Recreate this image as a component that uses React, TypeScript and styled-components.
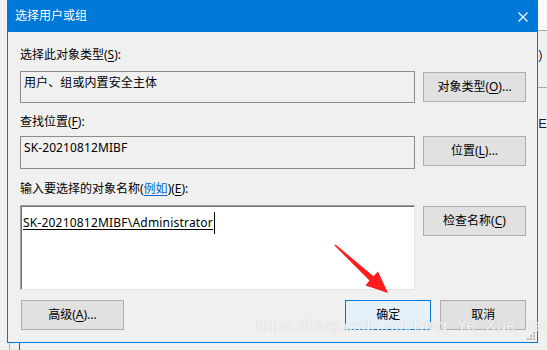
import styled, { createGlobalStyle } from "styled-components";

const GlobalStyle = createGlobalStyle`
  html, body {
    margin: 0;
    padding: 0;
    background: #f0f0f0;
  }
  * {
    box-sizing: border-box;
  }
`;

const font = `"Noto Sans", "Noto Sans CJK SC", sans-serif`;

const Page = styled.div`
  position: relative;
  width: 547px;
  height: 350px;
  overflow: hidden;
  background: #f0f0f0;
  font-family: ${font};
  font-size: 12px;
  color: #000;
`;

const TopArea = styled.div`
  display: flex;
  padding-left: 7px;
`;

const Dialog = styled.div`
  position: relative;
  width: 532px;
  height: 343px;
  border: 1px solid #0078d7;
  background: #f0f0f0;
  display: flex;
  flex-direction: column;
`;

const TitleBar = styled.div`
  height: 31px;
  background: #0078d7;
  color: #fff;
  display: flex;
  align-items: center;
  justify-content: space-between;
  padding: 0 9px 1px 7px;
  line-height: 16px;
`;

const CloseButton = styled.div`
  width: 10px;
  height: 10px;
  display: flex;
  margin-top: 1px;
`;

const Body = styled.div`
  padding: 15px 11px 0 12px;
  display: flex;
  flex-direction: column;
`;

const Label = styled.div<{ $top: number }>`
  margin-top: ${(p) => p.$top}px;
  height: 16px;
  line-height: 16px;
  white-space: nowrap;
`;

const Key = styled.span`
  text-decoration: underline;
  text-underline-offset: 2px;
`;

const Link = styled.span`
  color: #0066cc;
  text-decoration: underline;
  text-underline-offset: 2px;
`;

const Row = styled.div<{ $top: number }>`
  margin-top: ${(p) => p.$top}px;
  display: grid;
  grid-template-columns: 395px 103px;
  column-gap: 8px;
  align-items: start;
`;

const ReadBox = styled.div<{ $height: number }>`
  height: ${(p) => p.$height}px;
  border: 1px solid #8c8c8c;
  background: #f0f0f0;
  padding: 3px 2px 0 3px;
  line-height: 16px;
  white-space: nowrap;
  letter-spacing: 0.1px;
`;

const EditBox = styled.div`
  height: 85px;
  background: #fff;
  border-style: solid;
  border-width: 1px;
  border-color: #a0a0a0 #e3e3e3 #e3e3e3 #a0a0a0;
  box-shadow: inset 1px 1px 0 #6d6d6d;
  padding: 6px 2px 0 2px;
  line-height: 22px;
  white-space: nowrap;
  display: flex;
  align-items: flex-start;
`;

const Resolved = styled.span`
  text-decoration: underline;
  text-underline-offset: 2px;
  letter-spacing: 0.2px;
`;

const Caret = styled.span`
  display: inline-block;
  width: 1px;
  height: 22px;
  background: #000;
  margin-left: 1px;
`;

const Button = styled.div<{ $top?: number; $width?: number; $primary?: boolean }>`
  margin-top: ${(p) => p.$top ?? 0}px;
  width: ${(p) => p.$width ?? 103}px;
  height: 30px;
  border: 1px solid ${(p) => (p.$primary ? "#0078d7" : "#adadad")};
  background: ${(p) => (p.$primary ? "#e5f1fb" : "#e1e1e1")};
  display: flex;
  align-items: center;
  justify-content: center;
  line-height: 16px;
  white-space: nowrap;
`;

const Footer = styled.div`
  margin-top: 10px;
  display: flex;
  align-items: center;
  gap: 9px;
  padding-left: 1px;
`;

const Spacer = styled.div`
  flex: 1;
`;

const Side = styled.div`
  flex: 1;
  position: relative;
  font-family: "Liberation Sans", sans-serif;
  font-size: 13px;
`;

const SideTop = styled.div`
  height: 31px;
  background: #fafafa;
  border-bottom: 1px solid #a6a6a6;
`;

const SideText = styled.div<{ $top: number }>`
  margin-top: ${(p) => p.$top}px;
  line-height: 14px;
  color: #1a1a3a;
`;

const SideLine = styled.div<{ $top: number }>`
  margin-top: ${(p) => p.$top}px;
  height: 1px;
  background: #a6a6a6;
`;

const BottomStrip = styled.div`
  margin-left: 9px;
  width: 11px;
  height: 7px;
  border-left: 1px solid #b4b4b4;
  border-right: 1px solid #505050;
`;

const Watermark = styled.div`
  position: absolute;
  left: 256px;
  top: 316px;
  font-family: "Liberation Sans", Arial, sans-serif;
  font-size: 17px;
  line-height: 20px;
  color: rgba(255, 255, 255, 0.9);
  text-shadow: 0 0 1px rgba(0, 0, 0, 0.25);
  white-space: nowrap;
  pointer-events: none;
`;

const Arrow = styled.svg`
  position: absolute;
  left: 330px;
  top: 240px;
`;

const Grip = styled.svg`
  position: absolute;
  right: 1px;
  bottom: 1px;
`;

const App = () => {
  return (
    <Page>
      <GlobalStyle />
      <TopArea>
        <Dialog>
          <TitleBar>
            <span>选择用户或组</span>
            <CloseButton>
              <svg width="10" height="10" viewBox="0 0 10 10">
                <path d="M0.5 0.5 L9.5 9.5 M9.5 0.5 L0.5 9.5" stroke="#fff" strokeWidth="1.1" />
              </svg>
            </CloseButton>
          </TitleBar>
          <Body>
            <Label $top={0}>
              选择此对象类型(<Key>S</Key>):
            </Label>
            <Row $top={8}>
              <ReadBox $height={32}>用户、组或内置安全主体</ReadBox>
              <Button $top={1}>
                对象类型(<Key>O</Key>)...
              </Button>
            </Row>
            <Label $top={11}>
              查找位置(<Key>F</Key>):
            </Label>
            <Row $top={6}>
              <ReadBox $height={33}>SK-20210812MIBF</ReadBox>
              <Button>
                位置(<Key>L</Key>)...
              </Button>
            </Row>
            <Label $top={12}>
              输入要选择的对象名称(<Link>例如</Link>)(<Key>E</Key>):
            </Label>
            <Row $top={8}>
              <EditBox>
                <Resolved>SK-20210812MIBF\Administrator</Resolved>
                <Caret />
              </EditBox>
              <Button $top={1}>
                检查名称(<Key>C</Key>)
              </Button>
            </Row>
            <Footer>
              <Button>
                高级(<Key>A</Key>)...
              </Button>
              <Spacer />
              <Button $width={86} $primary>
                确定
              </Button>
              <Button $width={86}>取消</Button>
            </Footer>
          </Body>
          <Grip width="10" height="10" viewBox="0 0 10 10">
            {[
              [7, 1],
              [7, 4],
              [4, 4],
              [7, 7],
              [4, 7],
              [1, 7],
            ].map(([x, y]) => (
              <rect key={`${x}-${y}`} x={x} y={y} width="2" height="2" fill="#b8b8b8" />
            ))}
          </Grip>
        </Dialog>
        <Side>
          <SideTop />
          <SideText $top={17}>)</SideText>
          <SideLine $top={25} />
          <SideText $top={29}>E</SideText>
        </Side>
      </TopArea>
      <BottomStrip />
      <Arrow width="64" height="60" viewBox="0 0 64 60">
        <polygon
          points="4.5,5.5 39.5,40.6 35.5,45.5 58,53 48,31.5 43.5,36.2 5.5,4.5"
          fill="#ff1c1c"
        />
      </Arrow>
      <Watermark>https://blog.csdn.net/Bing_Ye_Xue_Yan</Watermark>
    </Page>
  );
};

export default App;
